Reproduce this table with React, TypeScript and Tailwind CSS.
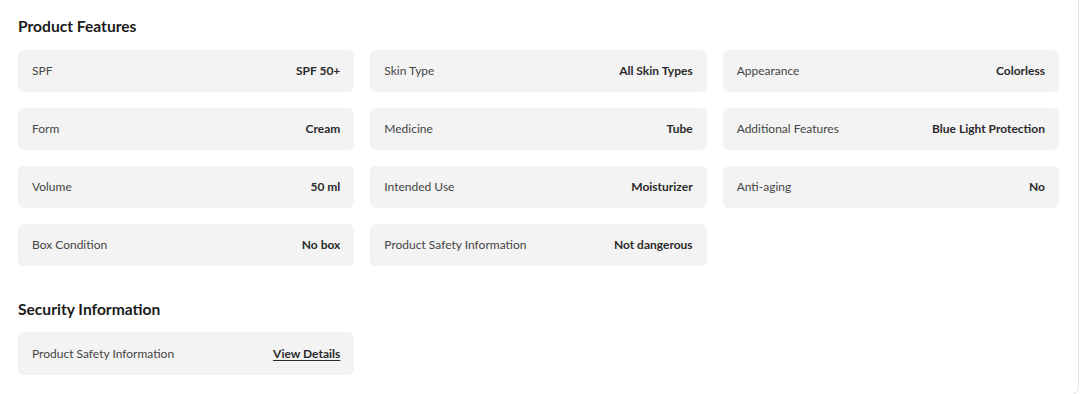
import React from 'react';

type Feature = { label: string; value: string };

const features: Feature[] = [
  { label: 'SPF', value: 'SPF 50+' },
  { label: 'Skin Type', value: 'All Skin Types' },
  { label: 'Appearance', value: 'Colorless' },
  { label: 'Form', value: 'Cream' },
  { label: 'Medicine', value: 'Tube' },
  { label: 'Additional Features', value: 'Blue Light Protection' },
  { label: 'Volume', value: '50 ml' },
  { label: 'Intended Use', value: 'Moisturizer' },
  { label: 'Anti-aging', value: 'No' },
  { label: 'Box Condition', value: 'No box' },
  { label: 'Product Safety Information', value: 'Not dangerous' },
];

function FeatureRow({ label, children }: { label: string; children: React.ReactNode }) {
  return (
    <div className="flex h-[42px] items-center justify-between rounded-md bg-[#f3f3f3] px-[14px] text-[12px]">
      <span className="text-[#454545]">{label}</span>
      <span className="font-bold text-[#2b2b2b]">{children}</span>
    </div>
  );
}

export default function App() {
  return (
    <div
      className="h-[395px] w-[1079px] rounded-br-lg border-r border-b border-[#e6e6e6] bg-white px-[18px]"
      style={{ fontFamily: 'Lato, "Open Sans", sans-serif' }}
    >
      {/* Product Features */}
      <h2 className="pt-[14px] text-[15.6px] leading-6 font-bold text-[#1b1b1b]">Product Features</h2>
      <div className="mt-[12px] grid w-[1041px] grid-cols-3 gap-x-4 gap-y-4">
        {features.map((f) => (
          <FeatureRow key={f.label} label={f.label}>
            {f.value}
          </FeatureRow>
        ))}
      </div>

      {/* Security Information */}
      <h2 className="mt-[31px] text-[15.6px] leading-6 font-bold text-[#1b1b1b]">Security Information</h2>
      <div className="mt-[11px] grid w-[1041px] grid-cols-3 gap-x-4">
        <div className="flex h-[43px] items-center justify-between rounded-md bg-[#f3f3f3] px-[14px] text-[12px]">
          <span className="text-[#454545]">Product Safety Information</span>
          <a href="#" className="font-bold text-[#2b2b2b] underline underline-offset-2">
            View Details
          </a>
        </div>
      </div>
    </div>
  );
}
